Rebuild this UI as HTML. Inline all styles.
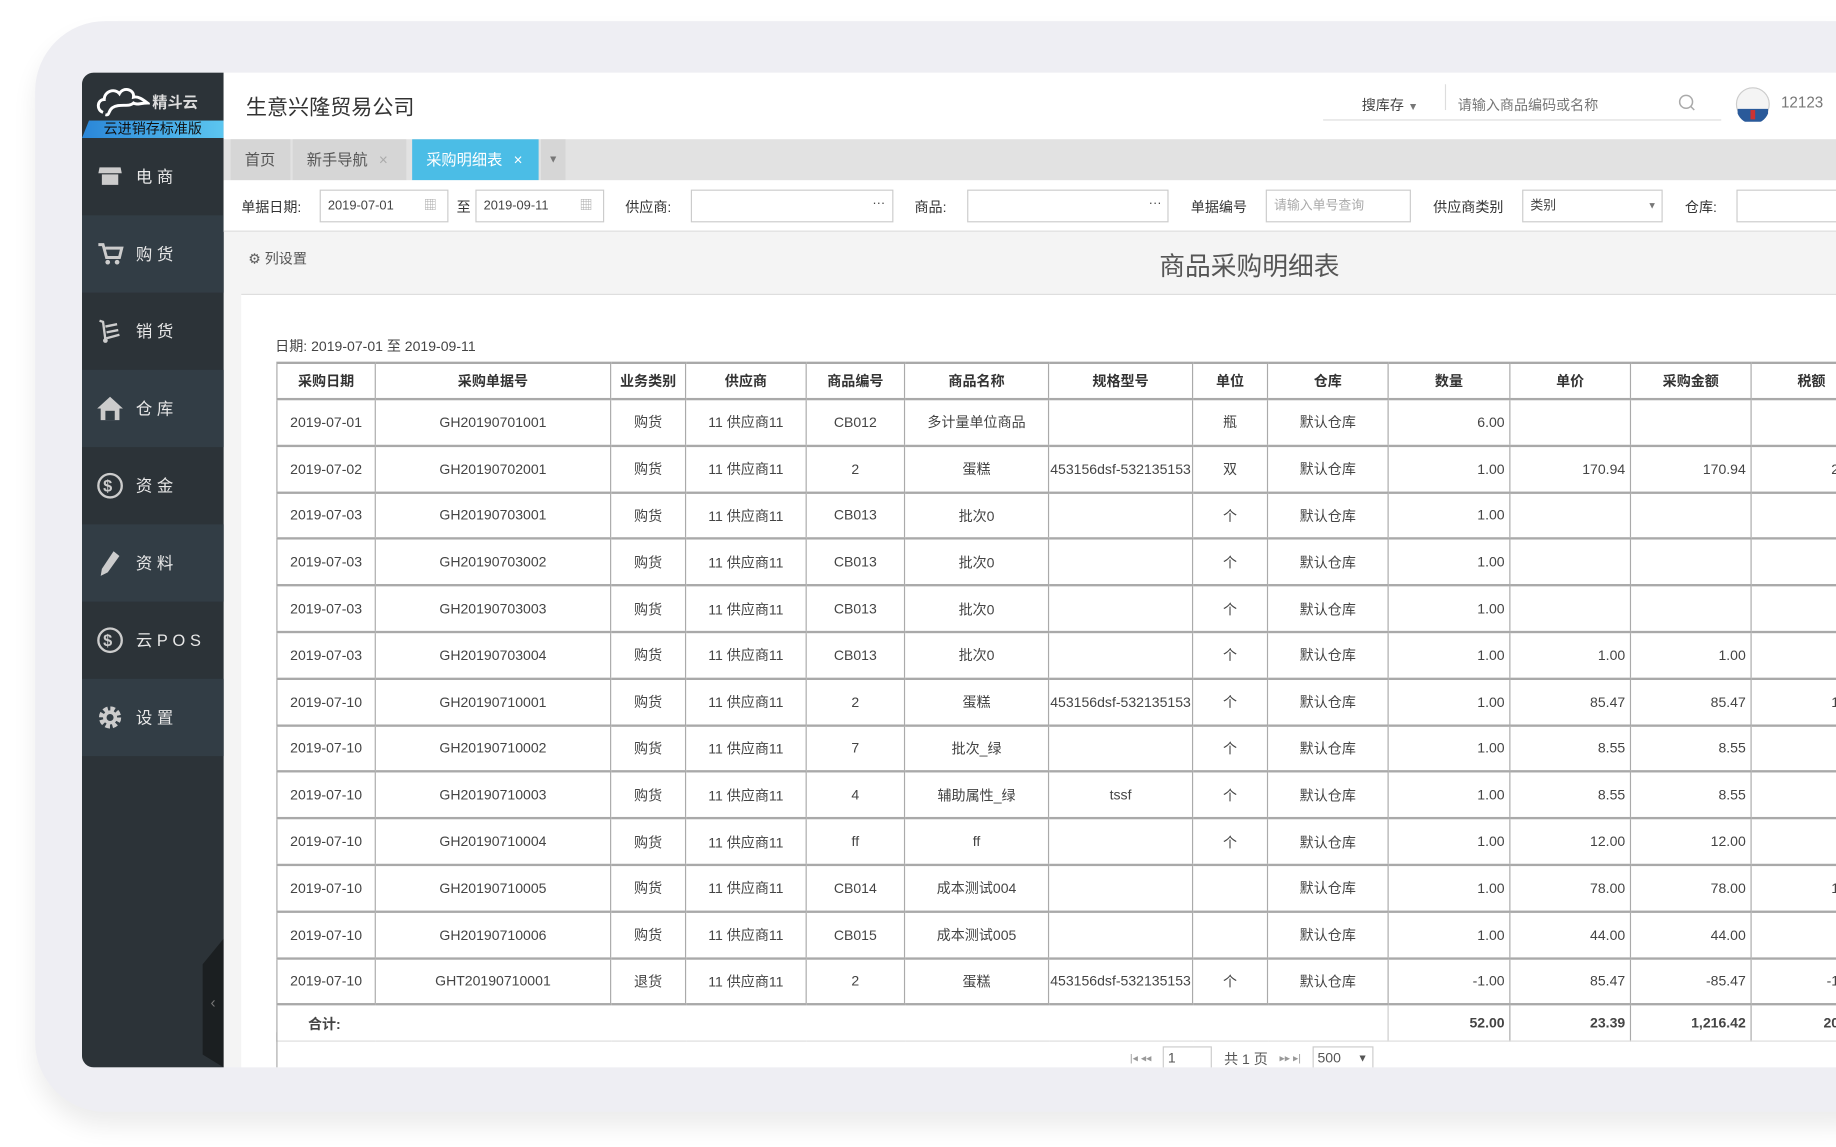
<!DOCTYPE html>
<html><head><meta charset="utf-8"><style>
*{margin:0;padding:0;box-sizing:border-box}
html,body{width:1836px;height:1147px;overflow:hidden;background:#fff}
body{font-family:"Liberation Sans","Noto Sans CJK SC",sans-serif;color:#333}
#w{position:absolute;left:0;top:0;width:1568px;height:980px;transform:scale(1.1709,1.1704);transform-origin:0 0}
.bg{position:absolute;left:30px;top:18px;width:1600px;height:932px;background:#eeeef3;border-radius:60px;box-shadow:0 12px 20px rgba(0,0,0,.08)}
.app{position:absolute;left:70px;top:62px;width:1520px;height:850px;background:#f4f4f4;border-radius:10px 0 0 10px;overflow:hidden}
.side{position:absolute;left:0;top:0;width:121px;height:850px;background:#2c3338}
.logo{height:56px;position:relative}
.logo .t{position:absolute;left:60px;top:15px;color:#ddd;font-size:13px;font-weight:bold}
.strip{position:absolute;left:0;top:41px;width:121px;height:15px;background:linear-gradient(90deg,#2a86d8,#5cc6f0);color:#111;font-size:12px;line-height:15px;text-align:center;clip-path:polygon(6px 0,100% 0,100% 100%,0 100%)}
.mi{height:66px;display:flex;align-items:center;padding-left:12px;color:#e8e8e8;font-size:14px;letter-spacing:4px}
.mi.l{background:#323d45}
.mi svg{width:24px;height:24px;margin-right:10px}
.handle{position:absolute;left:103px;top:740px;width:18px;height:110px;background:#1b1f21;clip-path:polygon(100% 0,100% 100%,0 90%,0 20%);color:#777;font-size:13px;line-height:110px;text-align:center}
.hdr{position:absolute;left:121px;top:0;right:0;height:57px;background:#fff}
.hdr .co{position:absolute;left:19px;top:16px;font-size:18px;color:#333}
.tabs{position:absolute;left:121px;top:57px;right:0;height:35px;background:#e2e2e2}
.tab{position:absolute;top:0;height:35px;line-height:35px;font-size:13px;color:#555;background:#d6d6d6;padding-left:12px}
.fil{position:absolute;left:121px;top:92px;right:0;height:44px;background:#fff;border-bottom:1px solid #ddd;font-size:12px}
.fil span{position:absolute;top:14px}
.in{position:absolute;top:8px;height:28px;border:1px solid #ccc;background:#fff;font-size:11px;line-height:26px;padding-left:6px;color:#444}
.panel{position:absolute;left:136px;top:189px;right:0;bottom:0;background:#fff;border-top:1px solid #ddd}
table{position:absolute;left:166px;top:247px;width:1466px;border-collapse:collapse;table-layout:fixed;font-size:12px;color:#444}
td,th{border-left:1px solid #aaa;border-right:1px solid #aaa;border-bottom:2px solid #a9a9a9;text-align:center;white-space:nowrap;overflow:hidden;height:39.8px;padding:0}
th{height:31px;font-weight:bold;color:#333;border-top:2px solid #a9a9a9}
td.r{text-align:right;padding-right:4px}
tr.tot td{height:31px;font-weight:bold;border-bottom:1px solid #ddd}
</style></head><body><div id="w">
<div class="bg"></div>
<div class="app">
 <div class="side">
  <div class="logo">
   <svg style="position:absolute;left:12px;top:8px" width="46" height="30" viewBox="0 0 46 30"><path d="M6 26 C0 24 1 15 7 15 C7 8 16 5 20 10 C23 4 33 6 32 13 C36 12 40 15 44 18 C38 18 35 20 32 18 C28 22 20 18 14 22 C10 25 12 29 8 28" fill="none" stroke="#fff" stroke-width="2.5"/></svg>
   <div class="t">精斗云</div>
   <div class="strip">云进销存标准版</div>
  </div>
  <div class="mi"><svg viewBox="0 0 24 24"><path d="M3 4h18l1 5H2zM5 10h14v9H5zM8 13h8v6H8z" fill="#ccc"/></svg>电商</div>
  <div class="mi l"><svg viewBox="0 0 24 24"><path d="M2 4h4l3 11h11l2-8H8" fill="none" stroke="#ccc" stroke-width="2.5"/><circle cx="10" cy="19" r="2" fill="#ccc"/><circle cx="18" cy="19" r="2" fill="#ccc"/></svg>购货</div>
  <div class="mi"><svg viewBox="0 0 24 24"><path d="M3 3l3 1 2 15M8 8l10-2M9 13l10-2M9 18l11-3" fill="none" stroke="#ccc" stroke-width="2"/><circle cx="8" cy="20" r="2" fill="#ccc"/></svg>销货</div>
  <div class="mi l"><svg viewBox="0 0 24 24"><path d="M12 2L1 12h3v10h16V12h3z" fill="#ccc"/><rect x="8" y="14" width="8" height="8" fill="#323d45"/></svg>仓库</div>
  <div class="mi"><svg viewBox="0 0 24 24"><circle cx="12" cy="12" r="10" fill="none" stroke="#ccc" stroke-width="2"/><text x="12" y="17" font-size="14" text-anchor="middle" fill="#ccc" font-weight="bold">$</text></svg>资金</div>
  <div class="mi l"><svg viewBox="0 0 24 24"><path d="M15 2l5 4-10 14-6 3 1-6z" fill="#ccc"/></svg>资料</div>
  <div class="mi"><svg viewBox="0 0 24 24"><circle cx="12" cy="12" r="10" fill="none" stroke="#ccc" stroke-width="2"/><text x="12" y="17" font-size="14" text-anchor="middle" fill="#ccc" font-weight="bold">$</text></svg>云POS</div>
  <div class="mi l"><svg viewBox="0 0 24 24"><circle cx="12" cy="12" r="7" fill="none" stroke="#ccc" stroke-width="5" stroke-dasharray="3.5 2"/><circle cx="12" cy="12" r="6" fill="#ccc"/><circle cx="12" cy="12" r="3" fill="#323d45"/></svg>设置</div>
  <div class="handle">‹</div>
 </div>
 <div class="hdr">
  <div class="co">生意兴隆贸易公司</div>
  <div style="position:absolute;left:939px;top:0;width:340px;height:41px;border-bottom:1px solid #ddd"></div>
  <div style="position:absolute;left:1043px;top:10px;height:22px;border-left:1px solid #ddd"></div>
  <div style="position:absolute;left:972px;top:19px;font-size:12px;color:#444">搜库存 <span style="font-size:9px;color:#777">▼</span></div>
  <div style="position:absolute;left:1054px;top:19px;font-size:12px;color:#777">请输入商品编码或名称</div>
  <svg style="position:absolute;left:1242px;top:18px" width="16" height="16" viewBox="0 0 16 16"><circle cx="7" cy="7" r="5.5" fill="none" stroke="#aaa" stroke-width="1.3"/><path d="M11 11l3 3" stroke="#aaa" stroke-width="1.3"/></svg>
  <svg style="position:absolute;left:1291px;top:12px" width="30" height="30" viewBox="0 0 30 30"><circle cx="15" cy="15" r="14" fill="#f4f4f4" stroke="#ccc"/><path d="M2 19h26v4a14 14 0 0 1-26 0z" fill="#2a5a9a"/><rect x="13" y="20" width="4" height="8" fill="#c33"/></svg>
  <div style="position:absolute;left:1330px;top:18px;font-size:13px;color:#777">12123</div>
 </div>
 <div class="tabs">
  <div class="tab" style="left:6px;width:51px">首页</div>
  <div class="tab" style="left:59px;width:97px">新手导航 <span style="color:#aaa;margin-left:6px">×</span></div>
  <div class="tab" style="left:161px;width:108px;background:#4bbde6;color:#fff">采购明细表 <span style="margin-left:6px">×</span></div>
  <div class="tab" style="left:271px;width:21px;padding-left:6px;font-size:9px;color:#777">▼</div>
 </div>
 <div class="fil">
  <span style="left:15px">单据日期:</span>
  <div class="in" style="left:82px;width:110px">2019-07-01<span style="left:88px;top:0;color:#aaa">▦</span></div>
  <span style="left:199px">至</span>
  <div class="in" style="left:215px;width:110px">2019-09-11<span style="left:88px;top:0;color:#aaa">▦</span></div>
  <span style="left:343px">供应商:</span>
  <div class="in" style="left:399px;width:173px"><span style="left:154px;top:-2px">···</span></div>
  <span style="left:590px">商品:</span>
  <div class="in" style="left:635px;width:172px"><span style="left:154px;top:-2px">···</span></div>
  <span style="left:826px">单据编号</span>
  <div class="in" style="left:890px;width:124px;color:#aaa">请输入单号查询</div>
  <span style="left:1033px">供应商类别</span>
  <div class="in" style="left:1109px;width:120px">类别<span style="left:106px;top:0;font-size:8px;color:#777">▼</span></div>
  <span style="left:1248px">仓库:</span>
  <div class="in" style="left:1292px;width:150px"></div>
 </div>
 <div style="position:absolute;left:142px;top:150px;font-size:12px;color:#555">⚙ 列设置</div>
 <div style="position:absolute;left:920px;top:148px;font-size:22px;color:#555">商品采购明细表</div>
 <div class="panel"></div>
 <div style="position:absolute;left:165px;top:225px;font-size:12px;color:#444">日期: 2019-07-01 至 2019-09-11</div>
 <table>
  <colgroup><col style="width:84px"><col style="width:201px"><col style="width:64px"><col style="width:103px"><col style="width:84px"><col style="width:123px"><col style="width:123px"><col style="width:64px"><col style="width:103px"><col style="width:104px"><col style="width:103px"><col style="width:103px"><col style="width:103px"><col style="width:104px"></colgroup>
  <tr><th>采购日期</th><th>采购单据号</th><th>业务类别</th><th>供应商</th><th>商品编号</th><th>商品名称</th><th>规格型号</th><th>单位</th><th>仓库</th><th>数量</th><th>单价</th><th>采购金额</th><th>税额</th><th></th></tr>
  <tr><td>2019-07-01</td><td>GH20190701001</td><td>购货</td><td>11 供应商11</td><td>CB012</td><td>多计量单位商品</td><td></td><td>瓶</td><td>默认仓库</td><td class="r">6.00</td><td></td><td></td><td></td><td></td></tr>
  <tr><td>2019-07-02</td><td>GH20190702001</td><td>购货</td><td>11 供应商11</td><td>2</td><td>蛋糕</td><td>453156dsf-532135153</td><td>双</td><td>默认仓库</td><td class="r">1.00</td><td class="r">170.94</td><td class="r">170.94</td><td class="r">29.06</td><td></td></tr>
  <tr><td>2019-07-03</td><td>GH20190703001</td><td>购货</td><td>11 供应商11</td><td>CB013</td><td>批次0</td><td></td><td>个</td><td>默认仓库</td><td class="r">1.00</td><td></td><td></td><td></td><td></td></tr>
  <tr><td>2019-07-03</td><td>GH20190703002</td><td>购货</td><td>11 供应商11</td><td>CB013</td><td>批次0</td><td></td><td>个</td><td>默认仓库</td><td class="r">1.00</td><td></td><td></td><td></td><td></td></tr>
  <tr><td>2019-07-03</td><td>GH20190703003</td><td>购货</td><td>11 供应商11</td><td>CB013</td><td>批次0</td><td></td><td>个</td><td>默认仓库</td><td class="r">1.00</td><td></td><td></td><td></td><td></td></tr>
  <tr><td>2019-07-03</td><td>GH20190703004</td><td>购货</td><td>11 供应商11</td><td>CB013</td><td>批次0</td><td></td><td>个</td><td>默认仓库</td><td class="r">1.00</td><td class="r">1.00</td><td class="r">1.00</td><td></td><td></td></tr>
  <tr><td>2019-07-10</td><td>GH20190710001</td><td>购货</td><td>11 供应商11</td><td>2</td><td>蛋糕</td><td>453156dsf-532135153</td><td>个</td><td>默认仓库</td><td class="r">1.00</td><td class="r">85.47</td><td class="r">85.47</td><td class="r">14.53</td><td></td></tr>
  <tr><td>2019-07-10</td><td>GH20190710002</td><td>购货</td><td>11 供应商11</td><td>7</td><td>批次_绿</td><td></td><td>个</td><td>默认仓库</td><td class="r">1.00</td><td class="r">8.55</td><td class="r">8.55</td><td></td><td></td></tr>
  <tr><td>2019-07-10</td><td>GH20190710003</td><td>购货</td><td>11 供应商11</td><td>4</td><td>辅助属性_绿</td><td>tssf</td><td>个</td><td>默认仓库</td><td class="r">1.00</td><td class="r">8.55</td><td class="r">8.55</td><td></td><td></td></tr>
  <tr><td>2019-07-10</td><td>GH20190710004</td><td>购货</td><td>11 供应商11</td><td>ff</td><td>ff</td><td></td><td>个</td><td>默认仓库</td><td class="r">1.00</td><td class="r">12.00</td><td class="r">12.00</td><td></td><td></td></tr>
  <tr><td>2019-07-10</td><td>GH20190710005</td><td>购货</td><td>11 供应商11</td><td>CB014</td><td>成本测试004</td><td></td><td></td><td>默认仓库</td><td class="r">1.00</td><td class="r">78.00</td><td class="r">78.00</td><td class="r">13.26</td><td></td></tr>
  <tr><td>2019-07-10</td><td>GH20190710006</td><td>购货</td><td>11 供应商11</td><td>CB015</td><td>成本测试005</td><td></td><td></td><td>默认仓库</td><td class="r">1.00</td><td class="r">44.00</td><td class="r">44.00</td><td></td><td></td></tr>
  <tr><td>2019-07-10</td><td>GHT20190710001</td><td>退货</td><td>11 供应商11</td><td>2</td><td>蛋糕</td><td>453156dsf-532135153</td><td>个</td><td>默认仓库</td><td class="r">-1.00</td><td class="r">85.47</td><td class="r">-85.47</td><td class="r">-14.53</td><td></td></tr>
  <tr class="tot"><td colspan="9" style="text-align:left;padding-left:26px;border-right:1px solid #ccc">合计:</td><td class="r">52.00</td><td class="r">23.39</td><td class="r">1,216.42</td><td class="r">206.79</td><td></td></tr>
 </table>
 <div style="position:absolute;left:166px;top:820px;width:1400px;height:30px;border-left:1px solid #aaa"></div>
 <div style="position:absolute;left:895px;top:832px;font-size:12px;color:#555;display:flex;align-items:center;gap:10px">
  <span style="color:#999;font-size:9px">|◂ ◂◂</span>
  <span style="display:inline-block;width:42px;height:20px;border:1px solid #ccc;padding-left:3px;line-height:18px">1</span>
  <span>共 1 页</span>
  <span style="color:#999;font-size:9px">▸▸ ▸|</span>
  <span style="display:inline-block;width:52px;height:20px;border:1px solid #ccc;padding-left:3px;line-height:18px">500 <span style="float:right;margin-right:4px;font-size:9px">▼</span></span>
 </div>
</div>
</div></body></html>
